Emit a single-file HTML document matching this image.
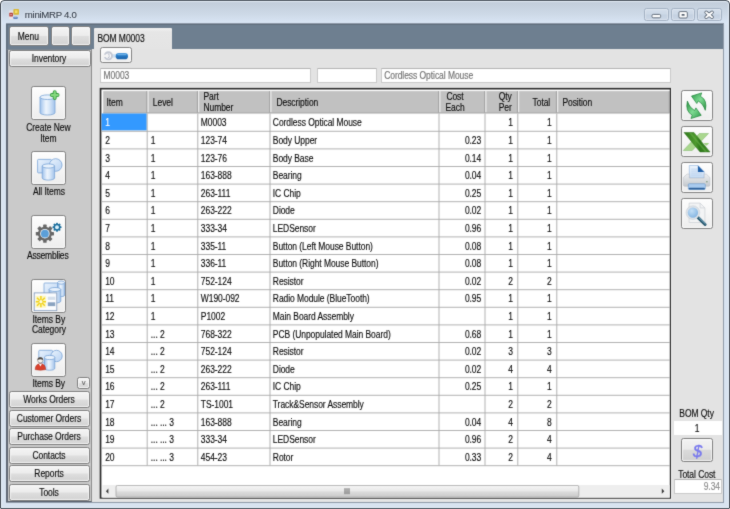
<!DOCTYPE html>
<html><head><meta charset="utf-8"><title>miniMRP 4.0</title>
<style>
html,body{margin:0;padding:0;}
body{width:730px;height:509px;overflow:hidden;position:relative;background:#fff;font-family:"Liberation Sans",sans-serif;font-size:8.5px;letter-spacing:-0.06px;color:#0c0c0c;}
.a{position:absolute;}
.frame{left:0;top:0;width:728px;height:507px;border:1px solid #515963;border-radius:4px 4px 1px 1px;background:linear-gradient(#c3cddb 0,#c4cfdc 3px,#cdd9e7 13px,#dae6f5 23px,#d8e3f0 24px,#d8e3f0 100%);box-shadow:inset 0 0 0 1px #e6eff9;}
.client{left:7px;top:24px;width:716px;height:478px;background:#e3e3e3;box-shadow:0 0 0 1px #8f9aa9;}
.band{left:6.2px;top:24px;width:717px;height:24.6px;background:#6e7f90;box-shadow:inset 1.5px 1px 0 #5f6d7c;}
.left{left:6.2px;top:48.6px;width:86.2px;height:453.6px;background:#cacaca;box-sizing:border-box;border-left:2px solid #5f6774;border-bottom:1.9px solid #5a626e;border-right:1.7px solid #8c8c8c;border-top:1px solid #7d8791;}
.btn{box-sizing:border-box;border:1px solid #7f7f7f;border-radius:2.5px;background:linear-gradient(#f4f4f4 0,#ececec 48%,#dedede 52%,#d2d2d2 100%);box-shadow:inset 0 0 0 1px rgba(255,255,255,.75);}
.ib{box-sizing:border-box;border:1px solid #828282;border-radius:2.5px;background:linear-gradient(#fdfdfd 0,#f6f6f6 50%,#ededed 100%);box-shadow:inset 0 0 0 1px rgba(255,255,255,.8);}
.t{white-space:nowrap;transform:scaleY(1.24);transform-origin:50% 50%;-webkit-text-stroke:0.12px currentColor;}
.inp{box-sizing:border-box;background:#fff;border:1px solid #c9c9c9;border-top-color:#b4b4b4;border-radius:1px;}
.grid{left:99.9px;top:88.1px;width:571.1px;height:410.7px;background:#fff;box-sizing:border-box;border:solid #2e2e2e;border-width:1.4px 1.2px 1.2px 1.5px;box-shadow:0.6px 0.6px 0 #f3f3f3;}
.hd{background:#c2c2c2;}
.cap{box-sizing:border-box;border:1px solid #a3b1c3;border-radius:2.5px;background:linear-gradient(#d3deeb 0,#ccd8e6 48%,#c4d1e1 52%,#cad6e5 100%);box-shadow:inset 0 0 0 1px rgba(255,255,255,.3);}
</style></head><body>
<svg width="0" height="0" style="position:absolute"><defs><filter id="soft" x="0" y="0" width="100%" height="100%" color-interpolation-filters="sRGB"><feConvolveMatrix order="3" kernelMatrix="0.02 0.08 0.02 0.08 0.6 0.08 0.02 0.08 0.02" edgeMode="duplicate" preserveAlpha="true"/></filter></defs></svg>
<div id="app" style="position:absolute;left:0;top:0;width:730px;height:509px;will-change:transform;filter:url(#soft);">

<div class="a frame"></div>
<svg class="a" style="left:8px;top:8px" width="15" height="14" viewBox="0 0 15 14"><g transform="translate(0.00 0.00)"><rect x="1" y="2.6" width="4.2" height="8.6" rx=".6" fill="#f1e4e6" opacity=".8"/><rect x="1.3" y="4.8" width="3.6" height="3.8" rx=".6" fill="#b2403c"/><rect x="2.4" y="6.1" width="1.3" height="1.1" fill="#f0c8c4"/><rect x="5.4" y="1.1" width="5.6" height="5.7" rx=".8" fill="#d9b836"/><rect x="6.9" y="2.4" width="2.6" height="2.6" fill="#f3e06a"/><rect x="5.5" y="8.8" width="4" height="2.3" rx=".4" fill="#5179b9"/><rect x="6.2" y="9.4" width="2.6" height=".8" fill="#9db6dc"/></g></svg>
<div class="a t" style="top:8.97px;line-height:12.0px;left:24.80px;font-size:9.6px;transform:scaleY(1.0);color:#2f3947;letter-spacing:-0.27px;-webkit-text-stroke:0.12px #2f3947;text-shadow:0 0 2px #fff;">miniMRP 4.0</div>
<div class="a cap" style="left:644px;top:8px;width:25px;height:13px;"></div>
<div class="a cap" style="left:671px;top:8px;width:24px;height:13px;"></div>
<div class="a cap" style="left:697px;top:8px;width:25px;height:13px;"></div>
<svg class="a" style="left:644px;top:8px" width="79" height="14" viewBox="0 0 79 14"><g transform="translate(0.00 0.00)"><rect x="8" y="6.4" width="8.6" height="3.4" rx="1.2" fill="#fff" stroke="#56616f" stroke-width=".9"/><rect x="34.9" y="3.6" width="8.4" height="6.4" rx="1.2" fill="#fff" stroke="#56616f" stroke-width=".9"/><rect x="37.6" y="5.9" width="3" height="1.9" rx=".4" fill="#56616f"/><path d="M62.2 4.4 L68 9.2 M68 4.4 L62.2 9.2" fill="none" stroke="#56616f" stroke-width="3.6" stroke-linecap="round"/><path d="M62.2 4.4 L68 9.2 M68 4.4 L62.2 9.2" fill="none" stroke="#fff" stroke-width="2" stroke-linecap="round"/></g></svg>
<div class="a client"></div>
<div class="a band"></div>
<div class="a left"></div>
<div class="a btn" style="left:9px;top:26.2px;width:39.8px;height:19.6px;"></div>
<div class="a t" style="top:29.55px;line-height:12.0px;left:-71.70px;width:200px;text-align:center;">Menu</div>
<div class="a btn" style="left:50.6px;top:26.2px;width:19.4px;height:19.6px;"></div>
<div class="a btn" style="left:71.2px;top:26.2px;width:19.6px;height:19.6px;"></div>
<div class="a btn" style="left:9.4px;top:50.3px;width:81.2px;height:16.8px;"></div>
<div class="a t" style="top:52.25px;line-height:12.0px;left:-51.00px;width:200px;text-align:center;">Inventory</div>
<div class="a btn" style="left:9.4px;top:391.4px;width:80.8px;height:16.8px;"></div>
<div class="a t" style="top:393.35px;line-height:12.0px;left:-51.00px;width:200px;text-align:center;">Works Orders</div>
<div class="a btn" style="left:9.4px;top:409.9px;width:80.8px;height:16.8px;"></div>
<div class="a t" style="top:411.85px;line-height:12.0px;left:-51.00px;width:200px;text-align:center;">Customer Orders</div>
<div class="a btn" style="left:9.4px;top:428.4px;width:80.8px;height:16.8px;"></div>
<div class="a t" style="top:430.35px;line-height:12.0px;left:-51.00px;width:200px;text-align:center;">Purchase Orders</div>
<div class="a btn" style="left:9.4px;top:446.9px;width:80.8px;height:16.8px;"></div>
<div class="a t" style="top:448.85px;line-height:12.0px;left:-51.00px;width:200px;text-align:center;">Contacts</div>
<div class="a btn" style="left:9.4px;top:465.4px;width:80.8px;height:16.8px;"></div>
<div class="a t" style="top:467.35px;line-height:12.0px;left:-51.00px;width:200px;text-align:center;">Reports</div>
<div class="a btn" style="left:9.4px;top:483.9px;width:80.8px;height:16.8px;"></div>
<div class="a t" style="top:485.85px;line-height:12.0px;left:-51.00px;width:200px;text-align:center;">Tools</div>
<svg width="0" height="0" style="position:absolute"><defs><linearGradient id="cy" x1="0" x2="1"><stop offset="0" stop-color="#9fc2ec"/><stop offset=".4" stop-color="#eef5fd"/><stop offset=".6" stop-color="#dbe9f9"/><stop offset="1" stop-color="#a3c3ea"/></linearGradient><linearGradient id="bx" x1="0" y1="0" x2="1" y2="1"><stop offset="0" stop-color="#eaf3fd"/><stop offset="1" stop-color="#b7d2f2"/></linearGradient><linearGradient id="gr" x1="0" y1="0" x2="0" y2="1"><stop offset="0" stop-color="#7ed17a"/><stop offset="1" stop-color="#1f8a2c"/></linearGradient><linearGradient id="bl" x1="0" y1="0" x2="0" y2="1"><stop offset="0" stop-color="#cfe3f7"/><stop offset="1" stop-color="#6f9fd4"/></linearGradient></defs></svg>
<div class="a ib" style="left:31.4px;top:86.4px;width:34.4px;height:33.8px;"></div>
<svg class="a" style="left:31px;top:86px" width="36" height="36" viewBox="0 0 36 36"><g transform="translate(0.40 0.40)"><path d="M8.6 10.8 V26.3 a7.500000000000001 2.3 0 0 0 15.000000000000002 0 V10.8 z" fill="url(#cy)" stroke="#78a3d6" stroke-width=".8"/><ellipse cx="16.1" cy="10.8" rx="7.500000000000001" ry="2.3" fill="#e9f2fc" stroke="#78a3d6" stroke-width=".8"/><path d="M23.3 5.9 v5.6 M20.5 8.7 h5.6" stroke="#339a3f" stroke-width="4" stroke-linecap="round"/><path d="M23.3 5.7 v6 M20.3 8.7 h6" stroke="#84d87e" stroke-width="2.2" stroke-linecap="round"/></g></svg>
<div class="a t" style="top:120.75px;line-height:12.0px;left:-51.60px;width:200px;text-align:center;">Create New</div>
<div class="a t" style="top:131.85px;line-height:12.0px;left:-51.60px;width:200px;text-align:center;">Item</div>
<div class="a ib" style="left:31.4px;top:151px;width:34.4px;height:33.8px;"></div>
<svg class="a" style="left:31px;top:151px" width="36" height="35" viewBox="0 0 36 35"><g transform="translate(0.40 0.00)"><rect x="6.2" y="8.4" width="13.8" height="13.5" rx=".8" fill="url(#bx)" stroke="#78a3d6" stroke-width=".8"/><circle cx="24.3" cy="14" r="6.3" fill="url(#bx)" stroke="#78a3d6" stroke-width=".8"/><path d="M10.8 15.0 V27.0 a6.199999999999999 2.1 0 0 0 12.399999999999999 0 V15.0 z" fill="url(#cy)" stroke="#78a3d6" stroke-width=".8"/><ellipse cx="17.0" cy="15.0" rx="6.199999999999999" ry="2.1" fill="#e9f2fc" stroke="#78a3d6" stroke-width=".8"/></g></svg>
<div class="a t" style="top:184.75px;line-height:12.0px;left:-51.10px;width:200px;text-align:center;">All Items</div>
<div class="a ib" style="left:31.4px;top:215px;width:34.4px;height:33.8px;"></div>
<svg class="a" style="left:31px;top:215px" width="36" height="35" viewBox="0 0 36 35"><g transform="translate(0.40 0.00)"><rect x="11.75" y="9.60" width="3.50" height="18.20" rx=".6" fill="#676767" transform="rotate(0 13.5 18.7)"/><rect x="11.75" y="9.60" width="3.50" height="18.20" rx=".6" fill="#676767" transform="rotate(45 13.5 18.7)"/><rect x="11.75" y="9.60" width="3.50" height="18.20" rx=".6" fill="#676767" transform="rotate(90 13.5 18.7)"/><rect x="11.75" y="9.60" width="3.50" height="18.20" rx=".6" fill="#676767" transform="rotate(135 13.5 18.7)"/><circle cx="13.5" cy="18.7" r="7" fill="#676767"/><circle cx="13.5" cy="18.7" r="4.76" fill="#f2f6fa"/><circle cx="13.5" cy="18.7" r="3.92" fill="#5b9fd9"/><rect x="24.73" y="7.65" width="1.75" height="9.10" rx=".6" fill="#1b6e9c" transform="rotate(0 25.6 12.2)"/><rect x="24.73" y="7.65" width="1.75" height="9.10" rx=".6" fill="#1b6e9c" transform="rotate(45 25.6 12.2)"/><rect x="24.73" y="7.65" width="1.75" height="9.10" rx=".6" fill="#1b6e9c" transform="rotate(90 25.6 12.2)"/><rect x="24.73" y="7.65" width="1.75" height="9.10" rx=".6" fill="#1b6e9c" transform="rotate(135 25.6 12.2)"/><circle cx="25.6" cy="12.2" r="3.5" fill="#1b6e9c"/><circle cx="25.6" cy="12.2" r="1.96" fill="#d9f0fb"/></g></svg>
<div class="a t" style="top:248.65px;line-height:12.0px;left:-52.30px;width:200px;text-align:center;letter-spacing:-0.2px;">Assemblies</div>
<div class="a ib" style="left:31.4px;top:279.1px;width:34.4px;height:33.8px;"></div>
<svg class="a" style="left:31px;top:279px" width="36" height="35" viewBox="0 0 36 35"><g transform="translate(0.40 0.10)"><path d="M26.2 3.5 V15.9 a3.549999999999999 1.6 0 0 0 7.099999999999998 0 V3.5 z" fill="url(#cy)" stroke="#78a3d6" stroke-width=".8"/><ellipse cx="29.75" cy="3.5" rx="3.549999999999999" ry="1.6" fill="#e9f2fc" stroke="#78a3d6" stroke-width=".8"/><rect x="12.6" y="3.9" width="13.6" height="13.6" rx=".8" fill="url(#bx)" stroke="#78a3d6" stroke-width=".8"/><path d="M17.7 10.4 V22 a5.85 2 0 0 0 11.7 0 V10.4 z" fill="url(#cy)" stroke="#78a3d6" stroke-width=".8"/><ellipse cx="23.549999999999997" cy="10.4" rx="5.85" ry="2" fill="#e9f2fc" stroke="#78a3d6" stroke-width=".8"/><rect x="2.8" y="13.8" width="22.6" height="17.8" fill="#fbfcfe" stroke="#7d95b8" stroke-width=".8"/><rect x="4.2" y="16.6" width="10.6" height="12" fill="#fdf7c0"/><path d="M9.5 17 v11.2 M4.4 22.6 h10.2 M5.6 18.6 l7.8 8 M13.4 18.6 l-7.8 8" stroke="#f0d21c" stroke-width="1.5"/><circle cx="9.5" cy="22.6" r="1.6" fill="#fffbe0"/><rect x="16.4" y="17.6" width="7.4" height="3.2" fill="#d5dfeb"/><rect x="16.4" y="23.2" width="7.4" height="3.8" fill="#8aa3c0"/></g></svg>
<div class="a t" style="top:312.85px;line-height:12.0px;left:-51.20px;width:200px;text-align:center;">Items By</div>
<div class="a t" style="top:322.55px;line-height:12.0px;left:-51.10px;width:200px;text-align:center;">Category</div>
<div class="a ib" style="left:31.4px;top:343.4px;width:34.4px;height:33.8px;"></div>
<svg class="a" style="left:31px;top:343px" width="36" height="36" viewBox="0 0 36 36"><g transform="translate(0.40 0.40)"><rect x="7.4" y="6.9" width="13.7" height="12.6" rx=".8" fill="url(#bx)" stroke="#78a3d6" stroke-width=".8"/><circle cx="25.1" cy="12.6" r="5.7" fill="url(#bx)" stroke="#78a3d6" stroke-width=".8"/><path d="M13.1 14.1 V24.7 a5.1499999999999995 2.1 0 0 0 10.299999999999999 0 V14.1 z" fill="url(#cy)" stroke="#78a3d6" stroke-width=".8"/><ellipse cx="18.25" cy="14.1" rx="5.1499999999999995" ry="2.1" fill="#e9f2fc" stroke="#78a3d6" stroke-width=".8"/><path d="M3.8 26.2 q0 -5.8 5.2 -5.8 q5.2 0 5.2 5.8 q-5.2 1.2 -10.4 0 z" fill="#d9412d" stroke="#a82a1a" stroke-width=".5"/><path d="M7.6 20.6 l1.4 2.6 l1.4 -2.6 z" fill="#fff"/><circle cx="8.9" cy="16.8" r="2.7" fill="#f7f3ef" stroke="#6b6059" stroke-width=".5"/><path d="M6.1 16.6 a2.8 2.8 0 0 1 5.6 0 q-2.8 -1.6 -5.6 0 z" fill="#4a4540"/></g></svg>
<div class="a t" style="top:376.55px;line-height:12.0px;left:-51.30px;width:200px;text-align:center;">Items By</div>
<div class="a btn" style="left:77px;top:377px;width:13px;height:12px;"></div>
<div class="a t" style="top:376.57px;line-height:12.0px;left:-16.30px;width:200px;text-align:center;font-size:7.6px;transform:scaleY(1.0);color:#606060;">v</div>
<div class="a" style="left:94px;top:27.6px;width:78.4px;height:21.4px;background:linear-gradient(#f2f2f2,#e6e6e6 4px,#e4e4e4);border-radius:1px 1px 0 0;"></div>
<div class="a t" style="top:32.35px;line-height:12.0px;left:97.40px;">BOM M0003</div>
<div class="a ib" style="left:100.3px;top:47.2px;width:32.2px;height:15.5px;"></div>
<svg class="a" style="left:100px;top:47px" width="34" height="17" viewBox="0 0 34 17"><g transform="translate(0.30 0.20)"><defs><linearGradient id="wh" x1="0" y1="0" x2="0" y2="1"><stop offset="0" stop-color="#4a9ade"/><stop offset=".45" stop-color="#2577c2"/><stop offset="1" stop-color="#1c62a8"/></linearGradient></defs><rect x="11.6" y="7" width="5" height="3.4" fill="#c9def2"/><circle cx="8.1" cy="8.6" r="3.6" fill="#fdfdff" stroke="#c3c8d3" stroke-width="1.9"/><rect x="3" y="7.5" width="4.6" height="2.3" fill="#f4f4f4"/><path d="M7.4 6.6 q2.2 0 1.4 2 q1 2 -1.4 2" fill="none" stroke="#aab0bd" stroke-width=".8"/><rect x="15.4" y="5.9" width="12.3" height="6.2" rx="3.1" fill="url(#wh)"/><rect x="17" y="6.6" width="9" height="1.5" rx=".75" fill="#7fbdee" opacity=".7"/></g></svg>
<div class="a inp" style="left:100.4px;top:68px;width:211px;height:15px;"></div>
<div class="a t" style="top:68.75px;line-height:12.0px;left:103.60px;color:#707070;">M0003</div>
<div class="a inp" style="left:317px;top:68px;width:59.6px;height:15px;"></div>
<div class="a inp" style="left:381.4px;top:68px;width:289.8px;height:15px;"></div>
<div class="a t" style="top:68.75px;line-height:12.0px;left:384.20px;color:#707070;">Cordless Optical Mouse</div>
<svg class="a" style="left:99px;top:87px" width="574" height="413" viewBox="99 87 574 413"><rect x="99.9" y="88.1" width="571.8" height="411.4" fill="#f4f4f4"/><rect x="99.7" y="87.9" width="571.3" height="410.85" fill="#2a2a2a"/><rect x="101.4" y="89.5" width="568.4" height="408.1" fill="#fff"/></svg>
<svg class="a" style="left:101px;top:89px" width="570" height="410" viewBox="0 0 570 410"><g transform="translate(0.40 0.50)"><rect x="1.8" y="1.6" width="566.6" height="21.9" fill="#c1c1c1"/><path d="M567.9 1.6 V23.5" stroke="#9c9c9c" stroke-width="1"/><path d="M45.4 1.6 V23.5" stroke="#999" stroke-width=".8"/><path d="M46.7 1.6 V22.9" stroke="#f6f6f6" stroke-width="1"/><path d="M96.0 1.6 V23.5" stroke="#999" stroke-width=".8"/><path d="M97.3 1.6 V22.9" stroke="#f6f6f6" stroke-width="1"/><path d="M168.2 1.6 V23.5" stroke="#999" stroke-width=".8"/><path d="M169.5 1.6 V22.9" stroke="#f6f6f6" stroke-width="1"/><path d="M337.2 1.6 V23.5" stroke="#999" stroke-width=".8"/><path d="M338.5 1.6 V22.9" stroke="#f6f6f6" stroke-width="1"/><path d="M383.2 1.6 V23.5" stroke="#999" stroke-width=".8"/><path d="M384.5 1.6 V22.9" stroke="#f6f6f6" stroke-width="1"/><path d="M416.0 1.6 V23.5" stroke="#999" stroke-width=".8"/><path d="M417.3 1.6 V22.9" stroke="#f6f6f6" stroke-width="1"/><path d="M455.0 1.6 V23.5" stroke="#999" stroke-width=".8"/><path d="M456.3 1.6 V22.9" stroke="#f6f6f6" stroke-width="1"/><path d="M1.8 23.5 H568.4" stroke="#a4a4a4" stroke-width="1"/><rect x="0.1" y="24.0" width="45.2" height="16.9" fill="#3399ff"/><path d="M0 41.8 H568.4" stroke="#a9a9a9" stroke-width=".9"/><path d="M0 59.4 H568.4" stroke="#a9a9a9" stroke-width=".9"/><path d="M0 77.0 H568.4" stroke="#a9a9a9" stroke-width=".9"/><path d="M0 94.6 H568.4" stroke="#a9a9a9" stroke-width=".9"/><path d="M0 112.2 H568.4" stroke="#a9a9a9" stroke-width=".9"/><path d="M0 129.8 H568.4" stroke="#a9a9a9" stroke-width=".9"/><path d="M0 147.4 H568.4" stroke="#a9a9a9" stroke-width=".9"/><path d="M0 165.0 H568.4" stroke="#a9a9a9" stroke-width=".9"/><path d="M0 182.6 H568.4" stroke="#a9a9a9" stroke-width=".9"/><path d="M0 200.2 H568.4" stroke="#a9a9a9" stroke-width=".9"/><path d="M0 217.8 H568.4" stroke="#a9a9a9" stroke-width=".9"/><path d="M0 235.4 H568.4" stroke="#a9a9a9" stroke-width=".9"/><path d="M0 253.0 H568.4" stroke="#a9a9a9" stroke-width=".9"/><path d="M0 270.6 H568.4" stroke="#a9a9a9" stroke-width=".9"/><path d="M0 288.2 H568.4" stroke="#a9a9a9" stroke-width=".9"/><path d="M0 305.8 H568.4" stroke="#a9a9a9" stroke-width=".9"/><path d="M0 323.4 H568.4" stroke="#a9a9a9" stroke-width=".9"/><path d="M0 341.0 H568.4" stroke="#a9a9a9" stroke-width=".9"/><path d="M0 358.6 H568.4" stroke="#a9a9a9" stroke-width=".9"/><path d="M0 376.2 H568.4" stroke="#a9a9a9" stroke-width=".9"/><path d="M45.8 24.0 V376.0" stroke="#a9a9a9" stroke-width=".9"/><path d="M96.4 24.0 V376.0" stroke="#a9a9a9" stroke-width=".9"/><path d="M168.6 24.0 V376.0" stroke="#a9a9a9" stroke-width=".9"/><path d="M337.6 24.0 V376.0" stroke="#a9a9a9" stroke-width=".9"/><path d="M383.6 24.0 V376.0" stroke="#a9a9a9" stroke-width=".9"/><path d="M416.4 24.0 V376.0" stroke="#a9a9a9" stroke-width=".9"/><path d="M455.4 24.0 V376.0" stroke="#a9a9a9" stroke-width=".9"/></g></svg>
<div class="a t" style="top:96.15px;line-height:12.0px;left:106.40px;">Item</div>
<div class="a t" style="top:96.15px;line-height:12.0px;left:152.80px;">Level</div>
<div class="a t" style="top:90.35px;line-height:12.0px;left:203.40px;">Part</div>
<div class="a t" style="top:100.75px;line-height:12.0px;left:203.40px;">Number</div>
<div class="a t" style="top:96.15px;line-height:12.0px;left:276.40px;">Description</div>
<div class="a t" style="top:90.35px;line-height:12.0px;left:355.00px;width:200px;text-align:center;">Cost</div>
<div class="a t" style="top:100.75px;line-height:12.0px;left:355.00px;width:200px;text-align:center;">Each</div>
<div class="a t" style="top:90.35px;line-height:12.0px;left:311.80px;width:200px;text-align:right;">Qty</div>
<div class="a t" style="top:100.75px;line-height:12.0px;left:311.80px;width:200px;text-align:right;">Per</div>
<div class="a t" style="top:96.15px;line-height:12.0px;left:350.20px;width:200px;text-align:right;">Total</div>
<div class="a t" style="top:96.15px;line-height:12.0px;left:562.40px;">Position</div>
<div class="a t" style="top:116.35px;line-height:12.0px;left:105.20px;color:#fff;">1</div>
<div class="a t" style="top:116.35px;line-height:12.0px;left:200.80px;">M0003</div>
<div class="a t" style="top:116.35px;line-height:12.0px;left:272.80px;">Cordless Optical Mouse</div>
<div class="a t" style="top:116.35px;line-height:12.0px;left:312.80px;width:200px;text-align:right;">1</div>
<div class="a t" style="top:116.35px;line-height:12.0px;left:351.60px;width:200px;text-align:right;">1</div>
<div class="a t" style="top:133.95px;line-height:12.0px;left:105.20px;">2</div>
<div class="a t" style="top:133.95px;line-height:12.0px;left:150.80px;">1</div>
<div class="a t" style="top:133.95px;line-height:12.0px;left:200.80px;">123-74</div>
<div class="a t" style="top:133.95px;line-height:12.0px;left:272.80px;">Body Upper</div>
<div class="a t" style="top:133.95px;line-height:12.0px;left:281.20px;width:200px;text-align:right;">0.23</div>
<div class="a t" style="top:133.95px;line-height:12.0px;left:312.80px;width:200px;text-align:right;">1</div>
<div class="a t" style="top:133.95px;line-height:12.0px;left:351.60px;width:200px;text-align:right;">1</div>
<div class="a t" style="top:151.55px;line-height:12.0px;left:105.20px;">3</div>
<div class="a t" style="top:151.55px;line-height:12.0px;left:150.80px;">1</div>
<div class="a t" style="top:151.55px;line-height:12.0px;left:200.80px;">123-76</div>
<div class="a t" style="top:151.55px;line-height:12.0px;left:272.80px;">Body Base</div>
<div class="a t" style="top:151.55px;line-height:12.0px;left:281.20px;width:200px;text-align:right;">0.14</div>
<div class="a t" style="top:151.55px;line-height:12.0px;left:312.80px;width:200px;text-align:right;">1</div>
<div class="a t" style="top:151.55px;line-height:12.0px;left:351.60px;width:200px;text-align:right;">1</div>
<div class="a t" style="top:169.15px;line-height:12.0px;left:105.20px;">4</div>
<div class="a t" style="top:169.15px;line-height:12.0px;left:150.80px;">1</div>
<div class="a t" style="top:169.15px;line-height:12.0px;left:200.80px;">163-888</div>
<div class="a t" style="top:169.15px;line-height:12.0px;left:272.80px;">Bearing</div>
<div class="a t" style="top:169.15px;line-height:12.0px;left:281.20px;width:200px;text-align:right;">0.04</div>
<div class="a t" style="top:169.15px;line-height:12.0px;left:312.80px;width:200px;text-align:right;">1</div>
<div class="a t" style="top:169.15px;line-height:12.0px;left:351.60px;width:200px;text-align:right;">1</div>
<div class="a t" style="top:186.75px;line-height:12.0px;left:105.20px;">5</div>
<div class="a t" style="top:186.75px;line-height:12.0px;left:150.80px;">1</div>
<div class="a t" style="top:186.75px;line-height:12.0px;left:200.80px;">263-111</div>
<div class="a t" style="top:186.75px;line-height:12.0px;left:272.80px;">IC Chip</div>
<div class="a t" style="top:186.75px;line-height:12.0px;left:281.20px;width:200px;text-align:right;">0.25</div>
<div class="a t" style="top:186.75px;line-height:12.0px;left:312.80px;width:200px;text-align:right;">1</div>
<div class="a t" style="top:186.75px;line-height:12.0px;left:351.60px;width:200px;text-align:right;">1</div>
<div class="a t" style="top:204.35px;line-height:12.0px;left:105.20px;">6</div>
<div class="a t" style="top:204.35px;line-height:12.0px;left:150.80px;">1</div>
<div class="a t" style="top:204.35px;line-height:12.0px;left:200.80px;">263-222</div>
<div class="a t" style="top:204.35px;line-height:12.0px;left:272.80px;">Diode</div>
<div class="a t" style="top:204.35px;line-height:12.0px;left:281.20px;width:200px;text-align:right;">0.02</div>
<div class="a t" style="top:204.35px;line-height:12.0px;left:312.80px;width:200px;text-align:right;">1</div>
<div class="a t" style="top:204.35px;line-height:12.0px;left:351.60px;width:200px;text-align:right;">1</div>
<div class="a t" style="top:221.95px;line-height:12.0px;left:105.20px;">7</div>
<div class="a t" style="top:221.95px;line-height:12.0px;left:150.80px;">1</div>
<div class="a t" style="top:221.95px;line-height:12.0px;left:200.80px;">333-34</div>
<div class="a t" style="top:221.95px;line-height:12.0px;left:272.80px;">LEDSensor</div>
<div class="a t" style="top:221.95px;line-height:12.0px;left:281.20px;width:200px;text-align:right;">0.96</div>
<div class="a t" style="top:221.95px;line-height:12.0px;left:312.80px;width:200px;text-align:right;">1</div>
<div class="a t" style="top:221.95px;line-height:12.0px;left:351.60px;width:200px;text-align:right;">1</div>
<div class="a t" style="top:239.55px;line-height:12.0px;left:105.20px;">8</div>
<div class="a t" style="top:239.55px;line-height:12.0px;left:150.80px;">1</div>
<div class="a t" style="top:239.55px;line-height:12.0px;left:200.80px;">335-11</div>
<div class="a t" style="top:239.55px;line-height:12.0px;left:272.80px;">Button (Left Mouse Button)</div>
<div class="a t" style="top:239.55px;line-height:12.0px;left:281.20px;width:200px;text-align:right;">0.08</div>
<div class="a t" style="top:239.55px;line-height:12.0px;left:312.80px;width:200px;text-align:right;">1</div>
<div class="a t" style="top:239.55px;line-height:12.0px;left:351.60px;width:200px;text-align:right;">1</div>
<div class="a t" style="top:257.15px;line-height:12.0px;left:105.20px;">9</div>
<div class="a t" style="top:257.15px;line-height:12.0px;left:150.80px;">1</div>
<div class="a t" style="top:257.15px;line-height:12.0px;left:200.80px;">336-11</div>
<div class="a t" style="top:257.15px;line-height:12.0px;left:272.80px;">Button (Right Mouse Button)</div>
<div class="a t" style="top:257.15px;line-height:12.0px;left:281.20px;width:200px;text-align:right;">0.08</div>
<div class="a t" style="top:257.15px;line-height:12.0px;left:312.80px;width:200px;text-align:right;">1</div>
<div class="a t" style="top:257.15px;line-height:12.0px;left:351.60px;width:200px;text-align:right;">1</div>
<div class="a t" style="top:274.75px;line-height:12.0px;left:105.20px;">10</div>
<div class="a t" style="top:274.75px;line-height:12.0px;left:150.80px;">1</div>
<div class="a t" style="top:274.75px;line-height:12.0px;left:200.80px;">752-124</div>
<div class="a t" style="top:274.75px;line-height:12.0px;left:272.80px;">Resistor</div>
<div class="a t" style="top:274.75px;line-height:12.0px;left:281.20px;width:200px;text-align:right;">0.02</div>
<div class="a t" style="top:274.75px;line-height:12.0px;left:312.80px;width:200px;text-align:right;">2</div>
<div class="a t" style="top:274.75px;line-height:12.0px;left:351.60px;width:200px;text-align:right;">2</div>
<div class="a t" style="top:292.35px;line-height:12.0px;left:105.20px;">11</div>
<div class="a t" style="top:292.35px;line-height:12.0px;left:150.80px;">1</div>
<div class="a t" style="top:292.35px;line-height:12.0px;left:200.80px;">W190-092</div>
<div class="a t" style="top:292.35px;line-height:12.0px;left:272.80px;">Radio Module (BlueTooth)</div>
<div class="a t" style="top:292.35px;line-height:12.0px;left:281.20px;width:200px;text-align:right;">0.95</div>
<div class="a t" style="top:292.35px;line-height:12.0px;left:312.80px;width:200px;text-align:right;">1</div>
<div class="a t" style="top:292.35px;line-height:12.0px;left:351.60px;width:200px;text-align:right;">1</div>
<div class="a t" style="top:309.95px;line-height:12.0px;left:105.20px;">12</div>
<div class="a t" style="top:309.95px;line-height:12.0px;left:150.80px;">1</div>
<div class="a t" style="top:309.95px;line-height:12.0px;left:200.80px;">P1002</div>
<div class="a t" style="top:309.95px;line-height:12.0px;left:272.80px;">Main Board Assembly</div>
<div class="a t" style="top:309.95px;line-height:12.0px;left:312.80px;width:200px;text-align:right;">1</div>
<div class="a t" style="top:309.95px;line-height:12.0px;left:351.60px;width:200px;text-align:right;">1</div>
<div class="a t" style="top:327.55px;line-height:12.0px;left:105.20px;">13</div>
<div class="a t" style="top:327.55px;line-height:12.0px;left:150.80px;">... 2</div>
<div class="a t" style="top:327.55px;line-height:12.0px;left:200.80px;">768-322</div>
<div class="a t" style="top:327.55px;line-height:12.0px;left:272.80px;">PCB (Unpopulated Main Board)</div>
<div class="a t" style="top:327.55px;line-height:12.0px;left:281.20px;width:200px;text-align:right;">0.68</div>
<div class="a t" style="top:327.55px;line-height:12.0px;left:312.80px;width:200px;text-align:right;">1</div>
<div class="a t" style="top:327.55px;line-height:12.0px;left:351.60px;width:200px;text-align:right;">1</div>
<div class="a t" style="top:345.15px;line-height:12.0px;left:105.20px;">14</div>
<div class="a t" style="top:345.15px;line-height:12.0px;left:150.80px;">... 2</div>
<div class="a t" style="top:345.15px;line-height:12.0px;left:200.80px;">752-124</div>
<div class="a t" style="top:345.15px;line-height:12.0px;left:272.80px;">Resistor</div>
<div class="a t" style="top:345.15px;line-height:12.0px;left:281.20px;width:200px;text-align:right;">0.02</div>
<div class="a t" style="top:345.15px;line-height:12.0px;left:312.80px;width:200px;text-align:right;">3</div>
<div class="a t" style="top:345.15px;line-height:12.0px;left:351.60px;width:200px;text-align:right;">3</div>
<div class="a t" style="top:362.75px;line-height:12.0px;left:105.20px;">15</div>
<div class="a t" style="top:362.75px;line-height:12.0px;left:150.80px;">... 2</div>
<div class="a t" style="top:362.75px;line-height:12.0px;left:200.80px;">263-222</div>
<div class="a t" style="top:362.75px;line-height:12.0px;left:272.80px;">Diode</div>
<div class="a t" style="top:362.75px;line-height:12.0px;left:281.20px;width:200px;text-align:right;">0.02</div>
<div class="a t" style="top:362.75px;line-height:12.0px;left:312.80px;width:200px;text-align:right;">4</div>
<div class="a t" style="top:362.75px;line-height:12.0px;left:351.60px;width:200px;text-align:right;">4</div>
<div class="a t" style="top:380.35px;line-height:12.0px;left:105.20px;">16</div>
<div class="a t" style="top:380.35px;line-height:12.0px;left:150.80px;">... 2</div>
<div class="a t" style="top:380.35px;line-height:12.0px;left:200.80px;">263-111</div>
<div class="a t" style="top:380.35px;line-height:12.0px;left:272.80px;">IC Chip</div>
<div class="a t" style="top:380.35px;line-height:12.0px;left:281.20px;width:200px;text-align:right;">0.25</div>
<div class="a t" style="top:380.35px;line-height:12.0px;left:312.80px;width:200px;text-align:right;">1</div>
<div class="a t" style="top:380.35px;line-height:12.0px;left:351.60px;width:200px;text-align:right;">1</div>
<div class="a t" style="top:397.95px;line-height:12.0px;left:105.20px;">17</div>
<div class="a t" style="top:397.95px;line-height:12.0px;left:150.80px;">... 2</div>
<div class="a t" style="top:397.95px;line-height:12.0px;left:200.80px;">TS-1001</div>
<div class="a t" style="top:397.95px;line-height:12.0px;left:272.80px;">Track&amp;Sensor Assembly</div>
<div class="a t" style="top:397.95px;line-height:12.0px;left:312.80px;width:200px;text-align:right;">2</div>
<div class="a t" style="top:397.95px;line-height:12.0px;left:351.60px;width:200px;text-align:right;">2</div>
<div class="a t" style="top:415.55px;line-height:12.0px;left:105.20px;">18</div>
<div class="a t" style="top:415.55px;line-height:12.0px;left:150.80px;">... ... 3</div>
<div class="a t" style="top:415.55px;line-height:12.0px;left:200.80px;">163-888</div>
<div class="a t" style="top:415.55px;line-height:12.0px;left:272.80px;">Bearing</div>
<div class="a t" style="top:415.55px;line-height:12.0px;left:281.20px;width:200px;text-align:right;">0.04</div>
<div class="a t" style="top:415.55px;line-height:12.0px;left:312.80px;width:200px;text-align:right;">4</div>
<div class="a t" style="top:415.55px;line-height:12.0px;left:351.60px;width:200px;text-align:right;">8</div>
<div class="a t" style="top:433.15px;line-height:12.0px;left:105.20px;">19</div>
<div class="a t" style="top:433.15px;line-height:12.0px;left:150.80px;">... ... 3</div>
<div class="a t" style="top:433.15px;line-height:12.0px;left:200.80px;">333-34</div>
<div class="a t" style="top:433.15px;line-height:12.0px;left:272.80px;">LEDSensor</div>
<div class="a t" style="top:433.15px;line-height:12.0px;left:281.20px;width:200px;text-align:right;">0.96</div>
<div class="a t" style="top:433.15px;line-height:12.0px;left:312.80px;width:200px;text-align:right;">2</div>
<div class="a t" style="top:433.15px;line-height:12.0px;left:351.60px;width:200px;text-align:right;">4</div>
<div class="a t" style="top:450.75px;line-height:12.0px;left:105.20px;">20</div>
<div class="a t" style="top:450.75px;line-height:12.0px;left:150.80px;">... ... 3</div>
<div class="a t" style="top:450.75px;line-height:12.0px;left:200.80px;">454-23</div>
<div class="a t" style="top:450.75px;line-height:12.0px;left:272.80px;">Rotor</div>
<div class="a t" style="top:450.75px;line-height:12.0px;left:281.20px;width:200px;text-align:right;">0.33</div>
<div class="a t" style="top:450.75px;line-height:12.0px;left:312.80px;width:200px;text-align:right;">2</div>
<div class="a t" style="top:450.75px;line-height:12.0px;left:351.60px;width:200px;text-align:right;">4</div>
<svg class="a" style="left:102px;top:485px" width="569" height="14" viewBox="0 0 569 14"><g transform="translate(0.60 0.00)"><defs><linearGradient id="th" x1="0" y1="0" x2="0" y2="1"><stop offset="0" stop-color="#f6f6f6"/><stop offset=".45" stop-color="#e9e9e9"/><stop offset=".55" stop-color="#dcdcdc"/><stop offset="1" stop-color="#c9c9c9"/></linearGradient></defs><rect x="0" y="0" width="567.2" height="12.6" fill="#eeeeee"/><rect x="13.4" y="0.4" width="462.8" height="11.8" rx="1.6" fill="url(#th)" stroke="#a3a3a3" stroke-width=".8"/><path d="M5.8 3.6 L3.3 6.2 L5.8 8.8 z M559.2 3.6 L561.7 6.2 L559.2 8.8 z" fill="#3a3a3a"/><path d="M242.4 3.2 v6 M244.4 3.2 v6 M246.4 3.2 v6" stroke="#5a5a5a" stroke-width=".9"/></g></svg>
<svg width="0" height="0" style="position:absolute"><defs><linearGradient id="g1" x1="0" y1="0" x2="1" y2="1"><stop offset="0" stop-color="#2c9a49"/><stop offset=".5" stop-color="#7fdb93"/><stop offset="1" stop-color="#27913f"/></linearGradient><linearGradient id="g2" x1="0" y1="0" x2="1" y2="0"><stop offset="0" stop-color="#2f7a1c"/><stop offset=".45" stop-color="#4e9a2e"/><stop offset=".6" stop-color="#2f7a1c"/><stop offset="1" stop-color="#3f8c26"/></linearGradient><linearGradient id="pb" x1="0" y1="0" x2="0" y2="1"><stop offset="0" stop-color="#eceef0"/><stop offset=".5" stop-color="#d9dcdf"/><stop offset="1" stop-color="#c3c7cc"/></linearGradient><linearGradient id="pp" x1="0" y1="0" x2="0" y2="1"><stop offset="0" stop-color="#eef5fd"/><stop offset="1" stop-color="#c5dbf3"/></linearGradient><radialGradient id="gl" cx=".4" cy=".35" r=".7"><stop offset="0" stop-color="#c4dff6"/><stop offset="1" stop-color="#7aaede"/></radialGradient></defs></svg>
<div class="a ib" style="left:680.5px;top:90.1px;width:32.2px;height:31.2px;"></div>
<svg class="a" style="left:680px;top:90px" width="34" height="33" viewBox="0 0 34 33"><g transform="translate(0.50 0.10)"><path d="M11 6 L21.2 2.8 L20 6.2 Q27.2 10 24.8 20.2 Q22.4 13.4 17.6 10.8 L16.3 13.4 Z" fill="url(#g1)" stroke="#1d8238" stroke-width=".7" stroke-linejoin="round"/><path d="M11 6 L21.2 2.8 L20 6.2 Q27.2 10 24.8 20.2 Q22.4 13.4 17.6 10.8 L16.3 13.4 Z" transform="rotate(180 15.85 15.6)" fill="url(#g1)" stroke="#1d8238" stroke-width=".7" stroke-linejoin="round"/></g></svg>
<div class="a ib" style="left:680.5px;top:126.1px;width:32.2px;height:31.2px;"></div>
<svg class="a" style="left:680px;top:126px" width="34" height="33" viewBox="0 0 34 33"><g transform="translate(0.50 0.10)"><path d="M18.8 7.4 H28 L11.7 24.4 H2.8 Z" fill="#a9d78e" stroke="#7db565" stroke-width=".5"/><path d="M23.2 17 H28.7 L26.4 19.4 H25.2 Z" fill="#9fd083"/><path d="M3.5 6.4 H13.4 L29.4 25.8 H19.5 Z" fill="url(#g2)" stroke="#2a6c18" stroke-width=".5"/><path d="M8.4 6.6 L10.6 6.6 L26.6 25.6 L24.4 25.6 Z" fill="#6cb04a" opacity=".55"/></g></svg>
<div class="a ib" style="left:680.5px;top:162.1px;width:32.2px;height:31.2px;"></div>
<svg class="a" style="left:680px;top:162px" width="34" height="33" viewBox="0 0 34 33"><g transform="translate(0.50 0.10)"><path d="M8.8 3.4 H17.6 L23.7 9.6 V16 H8.8 Z" fill="url(#pp)" stroke="#8fb4de" stroke-width=".6"/><path d="M17.4 3.4 L23.7 9.8 H17.4 Z" fill="#1f5fa8"/><path d="M10.6 7 h6 M10.6 9 h6 M10.6 11 h11 M10.6 13 h11" stroke="#b7d0ec" stroke-width=".7"/><path d="M6.6 12 H8.8 V16 H23.7 V12 H25.8 L29.4 15.4 V22.6 Q29.4 24.2 27.8 24.2 H4.4 Q2.8 24.2 2.8 22.6 V15.4 Z" fill="url(#pb)" stroke="#b4b9c0" stroke-width=".5"/><rect x="7.8" y="21.6" width="17" height="5.8" rx="1" fill="#a9cbef" stroke="#5d8ec4" stroke-width=".5"/><rect x="8.2" y="25.6" width="16.2" height="1.8" rx=".8" fill="#2d609a"/><circle cx="26.4" cy="19.6" r=".7" fill="#6e8f6a"/></g></svg>
<div class="a ib" style="left:680.5px;top:198.1px;width:32.2px;height:31.2px;"></div>
<svg class="a" style="left:680px;top:198px" width="34" height="33" viewBox="0 0 34 33"><g transform="translate(0.50 0.10)"><path d="M8.6 5 H19.6 L24.4 9.8 V24.4 H8.6 Z" fill="#f3f4f5" stroke="#cfd3d8" stroke-width=".8"/><path d="M19.6 5 V9.8 H24.4" fill="none" stroke="#cfd3d8" stroke-width=".8"/><path d="M17.6 19.6 L24.6 26.4" stroke="#28586f" stroke-width="3" stroke-linecap="round"/><path d="M18.6 19.6 L24.8 25.6" stroke="#8fc0d8" stroke-width=".9" stroke-linecap="round"/><circle cx="12.4" cy="14.5" r="6" fill="url(#gl)" stroke="#dde2e8" stroke-width="1.6"/><circle cx="12.4" cy="14.5" r="6.9" fill="none" stroke="#b9c2cd" stroke-width=".4"/></g></svg>
<div class="a t" style="top:407.15px;line-height:12.0px;left:596.60px;width:200px;text-align:center;">BOM Qty</div>
<div class="a" style="left:673.6px;top:421px;width:48.2px;height:13.8px;background:#fff;"></div>
<div class="a t" style="top:421.55px;line-height:12.0px;left:597.20px;width:200px;text-align:center;">1</div>
<div class="a btn" style="left:681.2px;top:438.4px;width:31.8px;height:23.4px;background:linear-gradient(#f3f3f3 0,#ebebeb 46%,#dadada 52%,#cfcfcf 100%);"></div>
<div class="a t" style="top:444.68px;line-height:12.0px;left:597.60px;width:200px;text-align:center;font-size:16.5px;transform:scaleY(1.0);color:#7878ee;letter-spacing:0px;font-style:italic;-webkit-text-stroke:0.4px #7878ee;">$</div>
<div class="a t" style="top:467.95px;line-height:12.0px;left:596.80px;width:200px;text-align:center;">Total Cost</div>
<div class="a inp" style="left:673.6px;top:479.2px;width:48.2px;height:15px;"></div>
<div class="a t" style="top:479.75px;line-height:12.0px;left:520.00px;width:200px;text-align:right;color:#8a8a8a;">9.34</div>
</div></body></html>
